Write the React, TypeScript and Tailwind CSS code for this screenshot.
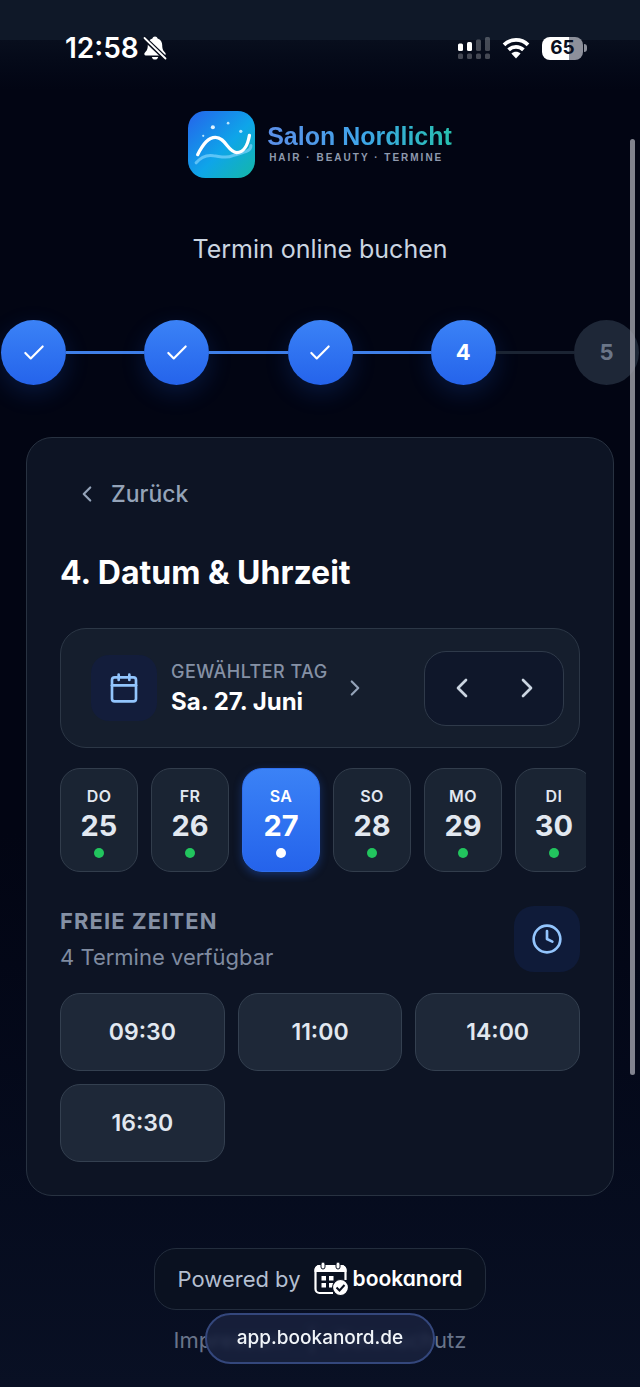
import { useState } from 'react'
import { Calendar, Check, ChevronLeft, ChevronRight, Clock } from 'lucide-react'

interface Day {
  weekday: string
  day: number
}

const days: Day[] = [
  { weekday: 'DO', day: 25 },
  { weekday: 'FR', day: 26 },
  { weekday: 'SA', day: 27 },
  { weekday: 'SO', day: 28 },
  { weekday: 'MO', day: 29 },
  { weekday: 'DI', day: 30 },
]

const slots = ['09:30', '11:00', '14:00', '16:30']

const steps = [1, 2, 3, 4, 5]

function StatusBar() {
  return (
    <div className="flex h-24 items-center justify-between pl-[65px] pr-[53px]">
      <div className="flex items-center gap-1 text-[28px] font-semibold leading-8 text-white">
        <span>12:58</span>
        <svg className="h-6 w-6" viewBox="0 0 24 24" fill="currentColor">
          <path d="M12 0.500c-1.300 0-2.300.8-2.600 1.900C6.300 3.500 4.800 6 4.800 9c0 4.500-1.200 5.900-3 7.700-1 1-.4 2.800 1 2.800h18.400c1.400 0 2-1.800 1-2.800C20.400 14.900 19.200 13.500 19.200 9c0-3-1.500-5.500-4.600-6.600C14.300 1.300 13.300.5 12 .5z" />
          <path d="M8.800 21h6.400c-.4 1.600-1.600 2.600-3.200 2.600S9.200 22.600 8.800 21z" />
          <path d="M1 2l22 21" stroke="#070c1a" strokeWidth="4.500" />
          <path d="M1.500 2l21 20.500" stroke="currentColor" strokeWidth="1.800" strokeLinecap="round" />
        </svg>
      </div>
      <div className="flex items-center gap-3">
        <svg className="h-6 w-8" viewBox="0 0 32 24" fill="#fff">
          <rect x="0" y="7.500" width="5" height="7.500" rx="1.500" />
          <rect x="9" y="6" width="5" height="9" rx="1.500" />
          <g opacity="0.25">
            <rect x="18" y="3.500" width="5" height="11.500" rx="1.500" />
            <rect x="27" y="1" width="5" height="14" rx="1.500" />
            <rect x="0" y="17.500" width="5" height="5.500" rx="1.500" />
            <rect x="9" y="17.500" width="5" height="5.500" rx="1.500" />
            <rect x="18" y="17.500" width="5" height="5.500" rx="1.500" />
            <rect x="27" y="17.500" width="5" height="5.500" rx="1.500" />
          </g>
        </svg>
        <svg className="h-[22px] w-7" viewBox="0 0 28 22" fill="none" stroke="#fff" strokeWidth="3.800">
          <path d="M2 7.800C8.800 1.200 19.200 1.200 26 7.800" />
          <path d="M6.600 12.800c4.200-4 10.600-4 14.800 0" />
          <path d="M14 21.500l-4.600-4.900c2.600-2.500 6.600-2.500 9.200 0z" fill="#fff" stroke="none" />
        </svg>
        <div className="flex items-center gap-px">
          <div className="flex h-[23px] w-[41px] items-center justify-center rounded-lg bg-linear-to-r from-white from-65% to-[#8d909b] to-65% text-[19px] font-bold leading-6 text-[#0a1020]">
            65
          </div>
          <div className="h-2 w-[3px] rounded-r-full bg-[#8d909b]" />
        </div>
      </div>
    </div>
  )
}

function SalonLogo() {
  return (
    <div className="flex items-center justify-center gap-3">
      <svg className="h-[67px] w-[67px]" viewBox="0 0 66 66">
        <defs>
          <linearGradient id="tile" x1="0" y1="0" x2="1" y2="1">
            <stop offset="0" stopColor="#2563eb" />
            <stop offset="0.55" stopColor="#0ea5e9" />
            <stop offset="1" stopColor="#14b8a6" />
          </linearGradient>
        </defs>
        <rect width="66" height="66" rx="17" fill="url(#tile)" />
        <path d="M8 51c5-6 11-8 17-7 8 1 13 3 19 0 6-2 10-3 13-4 3-1 5-3 5-6" fill="none" stroke="#7dd3fc" strokeOpacity="0.7" strokeWidth="3" strokeLinecap="round" />
        <path d="M9.500 43C15 32 20 26 27 26c10 0 12 14 21 15 7 0 11-8 12.500-17" fill="none" stroke="#fff" strokeWidth="3.200" strokeLinecap="round" />
        <circle cx="24.500" cy="16" r="2" fill="#e0f2fe" />
        <circle cx="39.500" cy="12" r="1.300" fill="#bae6fd" />
        <circle cx="52" cy="20" r="1.600" fill="#bae6fd" />
        <circle cx="15" cy="24.500" r="1.100" fill="#bae6fd" />
      </svg>
      <div className="pb-[5px] font-['Liberation_Sans',Arial,sans-serif]">
        <div className="bg-linear-to-r from-[#5b8fe8] via-[#3fa4ea] to-[#27bfae] bg-clip-text text-[25px] font-bold leading-8 text-transparent">
          Salon Nordlicht
        </div>
        <div className="pl-0.5 text-[10px] font-bold leading-3 tracking-[2px] text-[#8f9aae]">HAIR · BEAUTY · TERMINE</div>
      </div>
    </div>
  )
}

function Stepper({ current }: { current: number }) {
  return (
    <ol className="flex items-center px-px">
      {steps.map((step) => (
        <li key={step} className={step === 1 ? 'flex items-center' : 'flex flex-1 items-center'}>
          {step > 1 && (
            <div className={`h-[3px] flex-1 ${step <= current ? 'bg-[#3f7fe8]' : 'bg-[#1b2433]'}`} />
          )}
          <div
            className={`flex h-[65px] w-[65px] shrink-0 items-center justify-center rounded-full text-[22px] font-bold ${
              step <= current
                ? 'bg-linear-to-b from-[#3b82f6] to-[#2563eb] text-white shadow-[0_8px_24px_rgba(37,99,235,0.2)]'
                : 'bg-[#1e2737] text-[#6b7688]'
            }`}
          >
            {step < current ? <Check className="h-[26px] w-[26px]" strokeWidth={2} /> : step}
          </div>
        </li>
      ))}
    </ol>
  )
}

function BookanordLogo() {
  return (
    <span className="flex items-center gap-1 text-white">
      <svg className="h-9 w-9" viewBox="0 0 36 36">
        <path fill="none" stroke="currentColor" strokeWidth="2.200" d="M20 32H6.500a4 4 0 0 1-4-4V9a4 4 0 0 1 4-4h22a4 4 0 0 1 4 4v10" />
        <path fill="currentColor" d="M1.500 11V9a5 5 0 0 1 5-5h22a5 5 0 0 1 5 5v2z" />
        <rect x="8" y="1" width="4" height="7" rx="2" fill="currentColor" stroke="#0a1120" strokeWidth="1" />
        <rect x="23" y="1" width="4" height="7" rx="2" fill="currentColor" stroke="#0a1120" strokeWidth="1" />
        <path fill="currentColor" d="M8.500 15h4.500v4.500H8.500zM16 15h4.500v4.500H16zM8.500 22h4.500v4.500H8.500zM16 22h4.500v4.500H16z" />
        <circle cx="27.500" cy="26.500" r="8" fill="currentColor" stroke="#0a1120" strokeWidth="1.200" />
        <path fill="none" stroke="#0a1120" strokeWidth="2" d="M23.500 26.500l3 3 5-5.500" />
      </svg>
      <span className="text-[21px] font-semibold [font-feature-settings:'cv11']">bookanord</span>
    </span>
  )
}

export default function App() {
  const [selectedDay, setSelectedDay] = useState(27)
  const selected = days.find((d) => d.day === selectedDay) || days[2]
  const label = selected.weekday[0] + selected.weekday[1].toLowerCase()

  const moveDay = (offset: number) => {
    setSelectedDay((day) => Math.min(30, Math.max(25, day + offset)))
  }

  return (
    <div className="relative min-h-screen overflow-hidden bg-linear-to-b from-[#020513] from-60% to-[#091024] font-['Inter','Noto_Sans',sans-serif] text-[#e2e8f0]">
      {/* Browser chrome tint behind the status bar */}
      <div className="absolute inset-x-0 top-0 h-10 bg-[#0f1828]" />
      <div className="absolute inset-x-0 top-10 h-[50px] bg-linear-to-b from-[#080e1d] to-[#020513]" />

      <div className="relative">
        <StatusBar />
        <header className="pt-[15px]">
          <SalonLogo />
          <h1 className="mt-[53px] text-center text-[25px] leading-9 text-[#cbd5e1]">Termin online buchen</h1>
        </header>

        <div className="mt-[53px]">
          <Stepper current={4} />
        </div>

        <main className="mx-[26px] mt-[52px] rounded-[26px] border border-[#283241] bg-[#0d1424] px-[33px] pb-[33px]">
          <button className="mt-8 flex h-12 items-center gap-[11px] px-3.5 text-[23px] font-medium text-[#94a3b8]">
            <ChevronLeft className="h-[26px] w-[26px]" strokeWidth={2} />
            Zurück
          </button>

          <h2 className="mt-[35px] text-[32px] font-bold leading-10 text-white">4. Datum &amp; Uhrzeit</h2>

          <section className="mt-[35px] flex h-[120px] items-center justify-between rounded-[26px] border border-[#2c3746] bg-[#151e2d] pl-[30px] pr-[15px]">
            <button className="flex items-center text-left">
              <span className="flex h-[66px] w-[66px] items-center justify-center rounded-[18px] bg-[#131d3b] text-[#93c5fd]">
                <Calendar className="h-8 w-8" strokeWidth={2} />
              </span>
              <span className="ml-3.5">
                <span className="block text-[18px] font-medium leading-7 tracking-wide text-[#8591a5]">GEWÄHLTER TAG</span>
                <span className="block text-2xl font-bold leading-8 text-white">
                  {label}. {selected.day}. Juni
                </span>
              </span>
              <ChevronRight className="ml-3.5 h-[26px] w-[26px] text-[#94a3b8]" strokeWidth={2} />
            </button>
            <div className="flex h-[75px] w-[140px] items-center rounded-[22px] border border-[#2f3a4a] bg-[#0f172a] px-1 text-[#cbd5e1]">
              <button aria-label="Vorheriger Tag" onClick={() => moveDay(-1)} className="flex h-full flex-1 items-center justify-center">
                <ChevronLeft className="h-8 w-8" strokeWidth={2} />
              </button>
              <button aria-label="Nächster Tag" onClick={() => moveDay(1)} className="flex h-full flex-1 items-center justify-center">
                <ChevronRight className="h-8 w-8" strokeWidth={2} />
              </button>
            </div>
          </section>

          <div className="-mx-1.5 mt-2.5 flex gap-[13px] overflow-hidden px-1.5 py-2.5">
            {days.map((d) => {
              const active = d.day === selectedDay
              return (
                <button
                  key={d.day}
                  onClick={() => setSelectedDay(d.day)}
                  className={`flex h-[104px] w-[78px] shrink-0 flex-col items-center rounded-[20px] border pt-[13px] ${
                    active
                      ? 'border-[#2f6fee] bg-linear-to-b from-[#3b82f6] to-[#2563eb] text-white shadow-[0_3px_8px_rgba(37,99,235,0.35)]'
                      : 'border-[#323d4c] bg-[#1a2433]'
                  }`}
                >
                  <span className="text-base font-semibold leading-7 tracking-wide">{d.weekday}</span>
                  <span className="text-[29px] font-bold leading-8">{d.day}</span>
                  <span className={`mt-1.5 h-2.5 w-2.5 rounded-full ${active ? 'bg-white' : 'bg-[#22c55e]'}`} />
                </button>
              )
            })}
          </div>

          <section>
            <div className="mt-[21px] flex items-center justify-between">
              <div>
                <h3 className="text-[22px] font-bold leading-9 tracking-wider text-[#8591a5]">FREIE ZEITEN</h3>
                <p className="text-[22px] leading-9 text-[#7f8ba0]">4 Termine verfügbar</p>
              </div>
              <span className="flex h-[66px] w-[66px] items-center justify-center rounded-[20px] bg-[#0f1b39] text-[#93c5fd]">
                <Clock className="h-8 w-8" strokeWidth={2} />
              </span>
            </div>
            <div className="mt-[18px] grid grid-cols-3 gap-[13px]">
              {slots.map((slot) => (
                <button key={slot} className="h-[78px] rounded-[20px] border border-[#344050] bg-[#1e2838] text-[23px] font-semibold">
                  {slot}
                </button>
              ))}
            </div>
          </section>
        </main>

        <footer className="mt-[52px] flex flex-col items-center pb-[27px]">
          <a href="#" className="flex h-[62px] items-center gap-3 rounded-[22px] border border-[#232d3d] bg-[#0a1120] px-[23px] text-[22px] text-[#b4bfd0]">
            Powered by
            <BookanordLogo />
          </a>
          <nav className="mt-2.5 flex gap-5 text-[22px] leading-10 text-[#68748a]">
            <a href="#">Impressum</a>
            <span>|</span>
            <a href="#">Datenschutz</a>
          </nav>
        </footer>
      </div>

      {/* Floating address pill */}
      <div className="absolute inset-x-0 bottom-[23px] flex justify-center">
        <div className="flex h-[51px] w-[230px] items-center justify-center rounded-full border-2 border-[#34477c] bg-[#1a2340]/80 text-[19px] font-medium text-[#f1f5f9] backdrop-blur-[3px]">
          app.bookanord.de
        </div>
      </div>

      {/* Scroll indicator */}
      <div className="absolute right-[5px] top-[139px] h-[936px] w-[5px] rounded-full bg-[#a1a3ad]/80" />
    </div>
  )
}
